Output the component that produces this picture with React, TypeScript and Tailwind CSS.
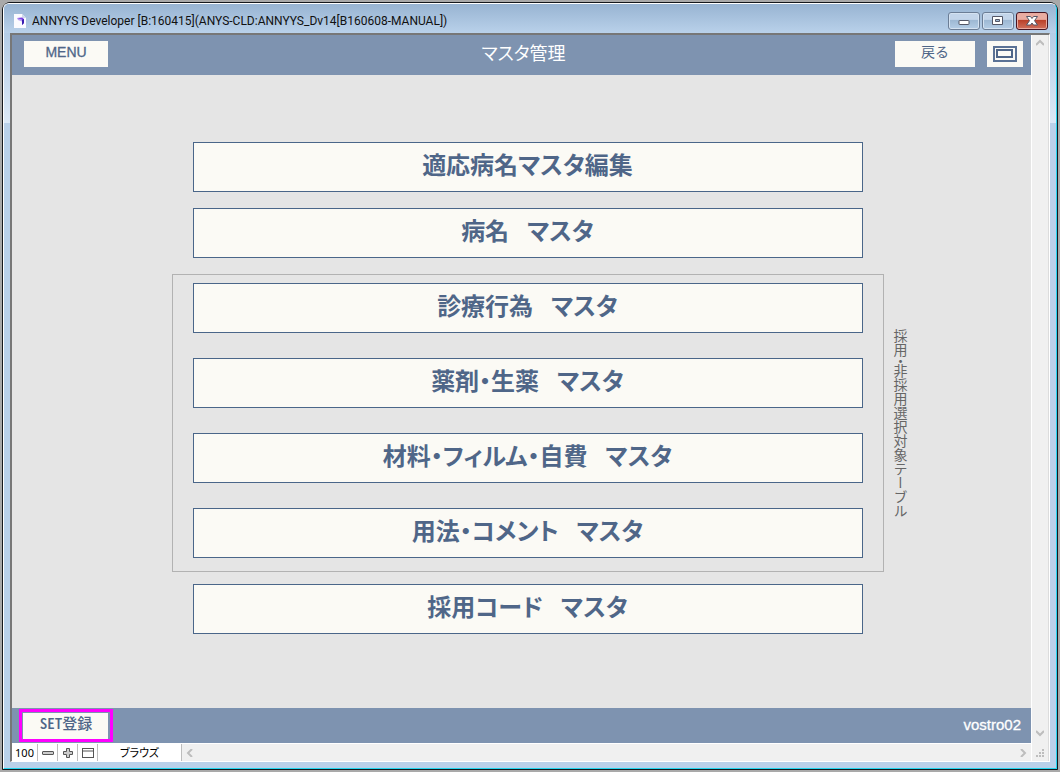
import type { ReactNode } from "react";

const JP = "font-['Liberation_Sans','Noto_Sans_CJK_JP',sans-serif]";

function MasterButton({ name, suffix }: { name: string; suffix?: string }) {
  return (
    <button
      type="button"
      className="flex h-[50px] w-full items-center justify-center border border-[#4a6689] bg-[#fbfaf5] pb-[2px] text-2xl font-bold whitespace-pre text-[#4f6688] [font-feature-settings:'palt']"
    >
      {name}
      {suffix && (
        <>
          <span className="text-lg">{"\u3000"}</span>
          {suffix}
        </>
      )}
    </button>
  );
}

function CaptionButton({ label, close, children }: { label: string; close?: boolean; children: ReactNode }) {
  return (
    <button
      type="button"
      aria-label={label}
      className={
        "flex h-[18px] w-8 items-center justify-center rounded-[3px] border " +
        (close
          ? "border-[#471522] bg-linear-to-b from-[#e9aca2] from-40% via-[#b93f28] via-45% to-[#d0705c] shadow-[inset_0_0_0_1px_#e8aaa0]"
          : "border-[#6b7d95] bg-linear-to-b from-[#c3d5ea] from-40% via-[#9db8d3] via-45% to-[#b4cde6] shadow-[inset_0_0_0_1px_#d4e2f1]")
      }
    >
      {children}
    </button>
  );
}

function TitleBar() {
  return (
    <header className="flex h-[29px] shrink-0 items-center justify-between bg-linear-to-b from-[#98b4d2] to-[#b9d1ea] pr-2 pl-[10px]">
      <div className="flex items-center gap-[6px] pt-[5px]">
        <svg width="12" height="14" viewBox="0 0 12 14" aria-hidden="true">
          <path d="M0 0h8l4 4v10H0z" fill="#fbfbff" />
          <path d="M8 0v4h4z" fill="#cfd8ec" />
          <path d="M3 4l5-.5 2 1.500v4l-2 2V7z" fill="#7a3fe0" />
          <path d="M3 4l5 1.500v2L4 6z" fill="#b99cf5" />
          <path d="M8 6l2-1v4l-2 2z" fill="#3b1fb0" />
        </svg>
        <h1 className="font-['Roboto',sans-serif] text-xs leading-4 text-[#111]">
          ANNYYS Developer [B:160415](ANYS-CLD:ANNYYS_Dv14[B160608-MANUAL])
        </h1>
      </div>
      <div className="flex gap-[2px] pt-1">
        <CaptionButton label="最小化">
          <svg width="12" height="12" viewBox="0 0 12 12">
            <rect x="1" y="5.5" width="10" height="4" rx="0.5" fill="#fff" stroke="#535666" />
          </svg>
        </CaptionButton>
        <CaptionButton label="元に戻す">
          <svg width="12" height="12" viewBox="0 0 12 12">
            <path d="M.5 1.500h10v8H.5zM3.500 4.500v2h4v-2z" fill="#fff" fillRule="evenodd" stroke="#535666" />
          </svg>
        </CaptionButton>
        <CaptionButton label="閉じる" close>
          <svg width="12" height="12" viewBox="0 0 12 12">
            <path
              d="M.5 1.500h4L6 3.500l1.500-2h4L8.500 5.700l3 4.300h-4L6 8l-1.500 2h-4l3-4.300z"
              fill="#fff"
              stroke="#535666"
            />
          </svg>
        </CaptionButton>
      </div>
    </header>
  );
}

function Toolbar() {
  return (
    <div className="grid h-10 shrink-0 grid-cols-[1fr_auto_1fr] items-center bg-[#7e93b0] pr-2 pb-[2px] pl-3">
      <button
        type="button"
        className="h-[26px] w-[84px] bg-[#fbfaf5] pb-1 text-sm leading-4 text-[#4f6688] [-webkit-text-stroke:0.3px]"
      >
        MENU
      </button>
      <h2 className="text-lg leading-6 text-white [font-feature-settings:'palt']">マスタ管理</h2>
      <div className="flex justify-end gap-3">
        <button type="button" className="h-[26px] w-20 bg-[#fbfaf5] pb-1 text-sm leading-4 text-[#4f6688]">
          戻る
        </button>
        <button
          type="button"
          aria-label="ウインドウ"
          className="flex h-[26px] w-9 items-center justify-center bg-[#fbfaf5]"
        >
          <svg width="24" height="16" viewBox="0 0 24 16">
            <rect x="1" y="1" width="22" height="14" fill="none" stroke="#5b7295" strokeWidth="2" />
            <rect x="4" y="4" width="15" height="7" fill="none" stroke="#4f6688" strokeWidth="2" />
          </svg>
        </button>
      </div>
    </div>
  );
}

function MasterMenu() {
  return (
    <main className="grid flex-1 grid-cols-[1fr_712px_1fr] content-start bg-[#e5e5e5] pt-[67px] pl-3">
      <div className="col-start-2 mb-4 flex flex-col gap-4 px-[21px]">
        <MasterButton name="適応病名マスタ編集" />
        <MasterButton name="病名" suffix="マスタ" />
      </div>
      <section
        aria-labelledby="adoption-label"
        className="col-start-2 flex flex-col gap-[25px] border border-[#b2b2b2] px-5 pt-2 pb-[13px]"
      >
        <MasterButton name="診療行為" suffix="マスタ" />
        <MasterButton name="薬剤・生薬" suffix="マスタ" />
        <MasterButton name="材料・フィルム・自費" suffix="マスタ" />
        <MasterButton name="用法・コメント" suffix="マスタ" />
      </section>
      <p
        id="adoption-label"
        className="ml-[7px] self-center justify-self-start text-sm leading-[18px] text-[#666] [writing-mode:vertical-rl]"
      >
        採用<span className="[font-feature-settings:'vhal']">・</span>非採用選択対象テーブル
      </p>
      <div className="col-start-2 mt-3 px-[21px]">
        <MasterButton name="採用コード" suffix="マスタ" />
      </div>
    </main>
  );
}

function Footer() {
  return (
    <footer className="flex h-[35px] shrink-0 items-center justify-between bg-[#7e93b0] pr-[10px] pl-[7px]">
      <button
        type="button"
        className="h-[33px] w-[94px] border-3 border-[#ff00ff] bg-[#fbfaf5] pb-1 text-[15px] leading-5 font-medium text-[#4f6688] shadow-[inset_1px_1px_0_#7e93b0,inset_-2px_0_0_#7e93b0]"
      >
        <span className="font-['Noto_Sans_CJK_JP',sans-serif] [font-feature-settings:'hwid']">SET登録</span>
      </button>
      <span className="pb-[2px] text-[15px] leading-5 text-white [-webkit-text-stroke:0.3px]">vostro02</span>
    </footer>
  );
}

function Chevron({ d }: { d: string }) {
  return (
    <svg width="8" height="8" viewBox="0 0 8 8" aria-hidden="true">
      <path d={d} fill="none" stroke="#bdbdbd" strokeWidth="2" />
    </svg>
  );
}

const CELL = "flex h-full items-center justify-center border-r border-[#bdbdbd] bg-white";

function StatusBar() {
  return (
    <div className="flex h-[18px] shrink-0 items-center border-t border-white bg-[#f0f0f0] text-[11px] leading-4 text-black">
      <div className={CELL + " w-[26px] font-['Noto_Sans',sans-serif]"}>100</div>
      <button type="button" aria-label="縮小" className={CELL + " w-5"}>
        <svg width="12" height="12" viewBox="0 0 12 12">
          <rect x=".5" y="4.500" width="11" height="3" rx="0.5" fill="#ccc" stroke="#555" />
        </svg>
      </button>
      <button type="button" aria-label="拡大" className={CELL + " w-5"}>
        <svg width="12" height="12" viewBox="0 0 12 12">
          <path d="M4.500 1.500h3v3h3v3h-3v3h-3v-3h-3v-3h3z" fill="#ccc" stroke="#555" />
        </svg>
      </button>
      <button type="button" aria-label="ステータスエリア" className={CELL + " w-5"}>
        <svg width="12" height="10" viewBox="0 0 12 10">
          <rect x=".5" y=".5" width="11" height="9" fill="#fff" stroke="#555" />
          <path d="M0 3h12" stroke="#555" />
        </svg>
      </button>
      <div className={CELL + " w-21 [font-feature-settings:'palt']"}>ブラウズ</div>
      <div className="flex flex-1 items-center justify-between px-1">
        <Chevron d="M6 0L2 4l4 4" />
        <Chevron d="M2 0l4 4-4 4" />
      </div>
    </div>
  );
}

export default function App() {
  return (
    <div className={"flex min-h-screen bg-[#a9a9a9] p-[2px] " + JP}>
      <div className="flex flex-1 rounded-t-lg border border-[#15181c] bg-[#15181c]">
        <div className="flex flex-1 flex-col overflow-hidden rounded-t-md border border-t-white border-r-[#23d5ef] border-b-[#23d5ef] border-l-white bg-[#b9d1ea]">
          <TitleBar />
          <div className="flex flex-1 bg-[linear-gradient(#b4cde7,#dce9f7_90px,#b9d1ea_90px)] px-[6px] pb-[6px]">
            <div className="flex flex-1 border-t-2 border-r border-b border-l-2 border-t-[#777] border-r-white border-b-white border-l-[#777]">
              <div className="flex flex-1 flex-col">
                <Toolbar />
                <MasterMenu />
                <Footer />
                <StatusBar />
              </div>
              <div className="flex w-[18px] flex-col items-center justify-between border-r border-l border-r-[#dcdcdc] border-l-white bg-[#f0f0f0] pt-1 pb-1">
                <Chevron d="M0 6l4-4 4 4" />
                <div className="flex flex-col items-center gap-3">
                  <Chevron d="M0 2l4 4 4-4" />
                  <svg width="8" height="8" viewBox="0 0 8 8" fill="#bdbdbd" aria-hidden="true">
                    <path d="M6 0h2v2H6zM3 3h2v2H3zM6 3h2v2H6zM0 6h2v2H0zM3 6h2v2H3zM6 6h2v2H6z" />
                  </svg>
                </div>
              </div>
            </div>
          </div>
        </div>
      </div>
    </div>
  );
}
